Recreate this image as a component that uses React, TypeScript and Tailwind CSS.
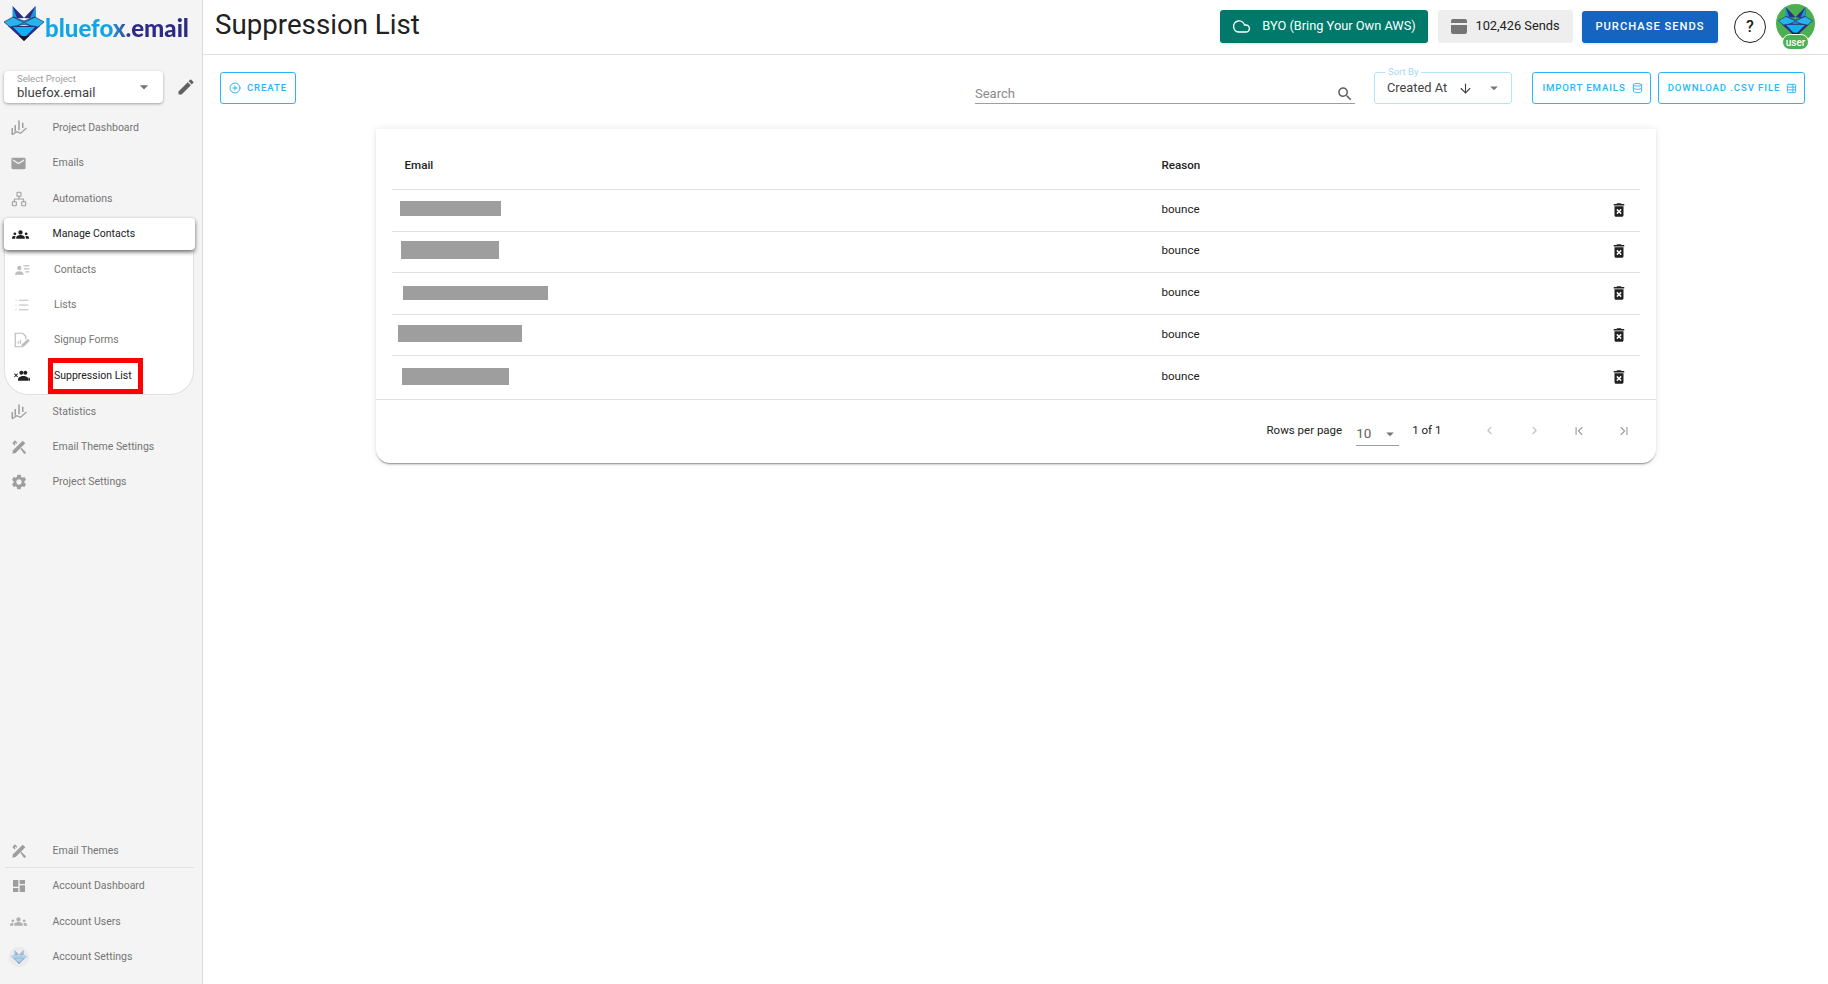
import React from "react";
import {
  ArrowDown,
  ChevronFirst,
  ChevronLast,
  ChevronLeft,
  ChevronRight,
  CirclePlus,
  Cloud,
  Database,
  List,
  Network,
  TableProperties,
} from "lucide-react";

const GROUPS =
  "M12 12.75c1.63 0 3.07.39 4.24.9 1.08.48 1.76 1.56 1.76 2.73V18H6v-1.61c0-1.18.68-2.26 1.76-2.73 1.17-.52 2.61-.91 4.24-.91zM4 13c1.1 0 2-.9 2-2s-.9-2-2-2-2 .9-2 2 .9 2 2 2zm1.13 1.1c-.37-.06-.74-.1-1.13-.1-.99 0-1.93.21-2.78.58C.48 14.9 0 15.62 0 16.43V18h4.5v-1.61c0-.83.23-1.61.63-2.29zM20 13c1.1 0 2-.9 2-2s-.9-2-2-2-2 .9-2 2 .9 2 2 2zm4 3.43c0-.81-.48-1.53-1.22-1.85-.85-.37-1.79-.58-2.78-.58-.39 0-.76.04-1.13.1.4.68.63 1.46.63 2.29V18H24v-1.57zM12 6c1.66 0 3 1.34 3 3s-1.34 3-3 3-3-1.34-3-3 1.34-3 3-3z";

function MuiIcon({ d, className }: { d: string; className?: string }) {
  return (
    <svg viewBox="0 0 24 24" fill="currentColor" className={className}>
      <path d={d} />
    </svg>
  );
}

function FoxMark({ className }: { className?: string }) {
  return (
    <svg viewBox="0 0 40 35" className={className}>
      <polygon points="8.5,0 20,12 8.5,13" fill="#1597d8" />
      <polygon points="8.5,0 20,12 13,12" fill="#2e2a85" />
      <polygon points="31.5,0 20,12 31.5,13" fill="#2e2a85" />
      <polygon points="31.5,0 26,12 31.5,13" fill="#1597d8" />
      <polygon points="4,20 36,20 20,35" fill="#2e2a85" />
      <polygon points="9,21 31,21 20,32" fill="#12b0f0" />
      <polygon points="0,16 9,11 20,15 31,11 40,16 34,21 20,18.5 6,21" fill="#27b4ee" stroke="#1c2a5e" strokeWidth="0.7" />
      <path d="M9 11L27 20M31 11L13 20" stroke="#1c2a5e" strokeWidth="0.7" fill="none" />
      <polygon points="15,30 25,30 20,35" fill="#111827" />
    </svg>
  );
}

function StatsIcon({ className }: { className?: string }) {
  return (
    <svg viewBox="0 0 24 24" fill="none" stroke="currentColor" strokeWidth="2" className={className}>
      <path d="M12 2v13M17 5v7M7 8v9M3 12v9" />
      <path d="M3 21l6-4 5 2 8-7" strokeWidth="1.6" />
    </svg>
  );
}

function ToolsIcon({ className }: { className?: string }) {
  return (
    <svg viewBox="0 0 24 24" fill="currentColor" className={className}>
      <path d="M2 6l4-4 3.5 3.5-1.6 1.6-1.3-1.3-1 1 1.3 1.3L5.300 9.700z" />
      <path d="M14 14.500l1.500-1.500 6.500 6.500V22h-2.500z" />
      <path d="M17.500 2.500l4 4L7 21l-5 1 1-5z" />
    </svg>
  );
}

function ContactsIcon({ className }: { className?: string }) {
  return (
    <svg viewBox="0 0 24 24" fill="currentColor" className={className}>
      <circle cx="8" cy="9" r="3.2" />
      <path d="M1.500 19c0-3.200 3-5 6.500-5s6.500 1.800 6.500 5z" />
      <path d="M14 5h9v1.600h-9zM15 9.500h8v1.600h-8zM17 14h6v1.600h-6z" />
    </svg>
  );
}

function FormIcon({ className }: { className?: string }) {
  return (
    <svg viewBox="0 0 24 24" fill="none" stroke="currentColor" strokeWidth="1.600" className={className}>
      <path d="M14 21H3V3h10l4 4v4" />
      <path d="M7 17v-3M10 17v-5" />
      <path d="M12 18l8-7 2 2-7 7h-3z" fill="currentColor" strokeWidth="1" />
    </svg>
  );
}

function SuppressedIcon({ className }: { className?: string }) {
  return (
    <svg viewBox="0 0 24 24" fill="currentColor" className={className}>
      <path d="M0 9l1-1 2 2 2-2 1 1-2 2 2 2-1 1-2-2-2 2-1-1 2-2z" />
      <circle cx="11" cy="7" r="3" />
      <circle cx="17" cy="7" r="3" />
      <path d="M6 19v-2c0-2.400 3.500-5 8-5s8 2.600 8 5v2z" />
      <path d="M22 14c1 .5 2 1.500 2 2.900V19h-1.500z" />
    </svg>
  );
}

function NavRow({
  icon,
  label,
  sub,
}: {
  icon: React.ReactNode;
  label: string;
  sub?: boolean;
}) {
  return (
    <div className="h-[35.4px] flex items-center text-[#757575]">
      <div className={`flex justify-center shrink-0 text-[#9e9e9e] ${sub ? "w-[40px] ml-[1px]" : "w-[37px]"}`}>{icon}</div>
      <span className={sub ? "ml-[12px]" : "ml-[15.5px]"}>{label}</span>
    </div>
  );
}

const redacted = [
  "ml-[8px] w-[101px] h-[15px] mb-[5px]",
  "ml-[9px] w-[98px] h-[18px] mb-[4px]",
  "ml-[11px] w-[145px] h-[14px] mb-[1px]",
  "ml-[6px] w-[124px] h-[17px] mb-[3px]",
  "ml-[10px] w-[107px] h-[17px] mb-[3px]",
];

const rowHeights = ["h-[42px]", "h-[41px]", "h-[42px]", "h-[41px]", "h-[43px]"];

export default function App() {
  return (
    <div className="h-screen flex bg-white text-[#212121] overflow-hidden font-['Roboto',sans-serif]">
      {/* Sidebar */}
      <aside className="w-[203px] shrink-0 bg-[#f4f4f4] border-r border-[#dcdcdc] flex flex-col justify-between text-[10.5px] pb-[9.5px]">
        <div>
          <div className="h-[71px] pl-[4px] pt-[6px]">
            <div className="flex items-start">
              <FoxMark className="w-[40px] h-[35px] shrink-0" />
              <span className="ml-[1px] mt-[7px] font-['Lato',sans-serif] font-black text-[24px] leading-[30px] bg-gradient-to-r from-[#12a5e4] from-45% to-[#2d2a87] to-60% bg-clip-text text-transparent">
                bluefox.email
              </span>
            </div>
          </div>

          <div className="flex items-center pl-[4px]">
            <div className="w-[159px] h-[32px] bg-white rounded-[4px] shadow-[0_1px_3px_rgba(0,0,0,0.35)] pl-[13px] pr-[9px] flex items-center justify-between">
              <div>
                <div className="text-[9.6px] leading-[11px] text-[#9e9e9e]">Select Project</div>
                <div className="mt-[1px] text-[13.1px] leading-[16px] text-[#424242]">bluefox.email</div>
              </div>
              <svg viewBox="0 0 24 24" className="w-[20px] h-[20px] text-[#757575]" fill="currentColor">
                <path d="M7 10l5 5 5-5z" />
              </svg>
            </div>
            <MuiIcon
              d="M3 17.25V21h3.75L17.81 9.94l-3.75-3.75L3 17.25zM20.71 7.04c.39-.39.39-1.02 0-1.41l-2.34-2.34a.9959.9959 0 0 0-1.41 0l-1.83 1.83 3.75 3.75 1.83-1.83z"
              className="ml-[13px] w-[20px] h-[20px] text-[#616161]"
            />
          </div>

          <div className="mt-[7.2px]">
            <NavRow icon={<StatsIcon className="w-[18px] h-[18px]" />} label="Project Dashboard" />
            <NavRow
              icon={
                <MuiIcon
                  d="M20 4H4c-1.1 0-1.99.9-1.99 2L2 18c0 1.1.9 2 2 2h16c1.1 0 2-.9 2-2V6c0-1.1-.9-2-2-2zm0 4l-8 5-8-5V6l8 5 8-5v2z"
                  className="w-[17px] h-[17px]"
                />
              }
              label="Emails"
            />
            <div className="pt-[0.3px]">
              <NavRow icon={<Network className="w-[16px] h-[16px]" strokeWidth={1.6} />} label="Automations" />
            </div>
          </div>

          <div className="mt-[1.6px] ml-[4px] mr-[7px] h-[32px] bg-white rounded-[4px] shadow-[0_2px_4px_rgba(0,0,0,0.6)] relative z-10 flex items-center text-[#212121]">
            <div className="w-[33px] flex justify-center shrink-0">
              <MuiIcon d={GROUPS} className="w-[17px] h-[17px] text-[#212121]" />
            </div>
            <span className="ml-[15.5px] mb-[1px]">Manage Contacts</span>
          </div>

          <div className="ml-[4px] mr-[8px] h-[145px] -mb-[2px] bg-white border border-t-0 border-[#e0e0e0] rounded-b-[24px] relative">
            <div className="-ml-[4px] pt-[1.6px]">
              <NavRow sub icon={<ContactsIcon className="w-[16px] h-[16px] text-[#bdbdbd]" />} label="Contacts" />
              <NavRow sub icon={<List className="w-[16px] h-[16px] text-[#bdbdbd]" strokeWidth={1.6} />} label="Lists" />
              <NavRow sub icon={<FormIcon className="w-[18px] h-[18px] text-[#bdbdbd]" />} label="Signup Forms" />
              <div className="h-[35.4px] flex items-center text-[#212121]">
                <div className="w-[40px] ml-[1px] flex justify-center shrink-0">
                  <SuppressedIcon className="w-[16px] h-[16px] text-[#212121]" />
                </div>
                <div className="ml-[6px] w-[95px] h-[36px] border-[5px] border-[#ff0000] flex items-center pl-[1px] pt-[1px] shrink-0 whitespace-nowrap">
                  Suppression List
                </div>
              </div>
            </div>
          </div>

          <div className="pt-[1px]">
            <NavRow icon={<StatsIcon className="w-[18px] h-[18px]" />} label="Statistics" />
          </div>
          <NavRow icon={<ToolsIcon className="w-[16px] h-[16px]" />} label="Email Theme Settings" />
          <div className="-mt-[0.4px]">
            <NavRow
              icon={
                <MuiIcon
                  d="M19.14 12.94c.04-.3.06-.61.06-.94 0-.32-.02-.64-.07-.94l2.03-1.58c.18-.14.23-.41.12-.61l-1.92-3.32c-.12-.22-.37-.29-.59-.22l-2.39.96c-.5-.38-1.03-.7-1.62-.94l-.36-2.54c-.04-.24-.24-.41-.48-.41h-3.84c-.24 0-.43.17-.47.41l-.36 2.54c-.59.24-1.13.57-1.62.94l-2.39-.96c-.22-.08-.47 0-.59.22L2.74 8.87c-.12.21-.08.47.12.61l2.03 1.58c-.05.3-.09.63-.09.94s.02.64.07.94l-2.03 1.58c-.18.14-.23.41-.12.61l1.92 3.32c.12.22.37.29.59.22l2.39-.96c.5.38 1.03.7 1.62.94l.36 2.54c.05.24.24.41.48.41h3.84c.24 0 .44-.17.47-.41l.36-2.54c.59-.24 1.13-.56 1.62-.94l2.39.96c.22.08.47 0 .59-.22l1.92-3.32c.12-.22.07-.47-.12-.61l-2.01-1.58zM12 15.6c-1.98 0-3.6-1.62-3.6-3.6s1.62-3.6 3.6-3.6 3.6 1.62 3.6 3.6-1.62 3.6-3.6 3.6z"
                  className="w-[18px] h-[18px]"
                />
              }
              label="Project Settings"
            />
          </div>
        </div>

        <div>
          <div className="-mb-[1.5px]">
            <NavRow icon={<ToolsIcon className="w-[16px] h-[16px]" />} label="Email Themes" />
          </div>
          <div className="ml-[5px] mr-[8px] border-t border-[#e0e0e0]" />
          <NavRow
            icon={
              <MuiIcon
                d="M3 13h8V3H3v10zm0 8h8v-6H3v6zm10 0h8V11h-8v10zm0-18v6h8V3h-8z"
                className="w-[16px] h-[16px]"
              />
            }
            label="Account Dashboard"
          />
          <NavRow icon={<MuiIcon d={GROUPS} className="w-[17px] h-[17px] text-[#b0b0b0]" />} label="Account Users" />
          <NavRow
            icon={
              <div className="w-[20px] h-[20px] rounded-full bg-[#e8e8ee] border border-[#dddddd] flex items-center justify-center opacity-60">
                <FoxMark className="w-[16px] h-[14px] opacity-60" />
              </div>
            }
            label="Account Settings"
          />
        </div>
      </aside>

      {/* Main */}
      <main className="flex-1 min-w-0">
        <header className="h-[55px] border-b border-[#e0e0e0] flex items-center pl-[12px] pr-[13px]">
          <h1 className="text-[27.7px] leading-none text-[#212121] mb-[5px]">Suppression List</h1>
          <div className="ml-auto flex items-center mb-[1px]">
            <button className="w-[208px] h-[33px] pb-[1px] rounded-[3px] bg-[#00796b] text-white text-[12.8px] flex items-center justify-center gap-[11px] shadow-sm">
              <Cloud className="w-[19px] h-[19px]" strokeWidth={1.8} />
              BYO (Bring Your Own AWS)
            </button>
            <div className="ml-[10px] w-[135px] h-[33px] pb-[1px] rounded-[3px] bg-[#eeeeee] text-[12.8px] flex items-center justify-center gap-[8px]">
              <span className="w-[16px] h-[15px] rounded-[2px] bg-[#757575] flex items-center">
                <span className="w-full h-[2px] bg-[#eeeeee] mb-[4px]" />
              </span>
              102,426 Sends
            </div>
            <button className="ml-[9px] w-[136px] h-[32px] pt-[1px] rounded-[3px] bg-[#1565c0] text-white text-[11.2px] font-medium tracking-[1px] shadow-sm">
              PURCHASE SENDS
            </button>
            <div className="ml-[16px] w-[32px] h-[32px] rounded-full border border-[#212121] flex items-center justify-center text-[16px] font-medium">
              ?
            </div>
            <div className="ml-[10px] mb-[6px] w-[39px] h-[39px] rounded-full bg-[#4caf50] relative flex items-center justify-center">
              <FoxMark className="w-[35px] h-[30px] mb-[4px]" />
              <span className="absolute left-[6px] top-[30px] w-[27px] h-[16px] rounded-full bg-[#4caf50] border border-white text-white text-[10px] font-medium flex items-center justify-center">
                user
              </span>
            </div>
          </div>
        </header>

        <div className="pt-[17px] pl-[17px] pr-[23px] flex items-center">
          <button className="w-[76px] h-[32px] border border-[#29b6f6] rounded-[3px] text-[#29b6f6] text-[9.6px] font-medium tracking-[0.9px] flex items-center justify-center gap-[6px]">
            <CirclePlus className="w-[12px] h-[12px] mb-[1px]" />
            CREATE
          </button>
          <div className="ml-auto w-[380px] h-[26px] mt-[6px] border-b border-[#9e9e9e] flex items-end justify-between pr-[1px] text-[13px] leading-[18px] text-[#8a8a8a]">
            Search
            <MuiIcon
              d="M15.5 14h-.79l-.28-.27C15.41 12.59 16 11.11 16 9.5 16 5.91 13.09 3 9.5 3S3 5.91 3 9.5 5.91 16 9.5 16c1.61 0 3.09-.59 4.23-1.57l.27.28v.79l5 4.99L20.49 19l-4.99-5zm-6 0C7.01 14 5 11.99 5 9.5S7.01 5 9.5 5 14 7.01 14 9.5 11.99 14 9.5 14z"
              className="w-[18px] h-[18px] text-[#616161]"
            />
          </div>
          <div className="ml-[19px] w-[138px] h-[32px] border border-[#b3e5fc] rounded-[3px] relative flex items-center pl-[12px] text-[12.8px] text-[#424242]">
            <span className="absolute left-[10px] -top-[6px] bg-white px-[3px] text-[9.5px] leading-[10px] text-[#a3d9f5]">
              Sort By
            </span>
            Created At
            <ArrowDown className="ml-[11px] w-[15px] h-[15px] text-[#424242]" strokeWidth={1.8} />
            <svg viewBox="0 0 24 24" className="ml-[12px] w-[18px] h-[18px] text-[#757575]" fill="currentColor">
              <path d="M7 10l5 5 5-5z" />
            </svg>
          </div>
          <button className="ml-[20px] w-[119px] h-[32px] pl-[2px] border border-[#29b6f6] rounded-[3px] text-[#29b6f6] text-[9.6px] font-medium tracking-[0.9px] flex items-center justify-center gap-[6px]">
            IMPORT EMAILS
            <Database className="w-[11px] h-[12px]" />
          </button>
          <button className="ml-[7px] w-[147px] h-[32px] pl-[2px] border border-[#29b6f6] rounded-[3px] text-[#29b6f6] text-[9.6px] font-medium tracking-[0.9px] flex items-center justify-center gap-[6px]">
            DOWNLOAD .CSV FILE
            <TableProperties className="w-[11px] h-[11px]" />
          </button>
        </div>

        {/* Table card */}
        <section className="mx-auto mt-[25px] w-[1280px] rounded-b-[14px] bg-white shadow-[0_2px_2px_-1px_rgba(0,0,0,0.45),0_0_7px_rgba(0,0,0,0.1)]">
          <div className="px-[16px] pt-[11px]">
            <div className="h-[50px] border-b border-[#e0e0e0] flex items-center text-[11.6px] font-medium pt-[3px]">
              <div className="w-[770px] pl-[13px]">Email</div>
              <div>Reason</div>
            </div>
            {redacted.map((cls, i) => (
              <div
                key={i}
                className={`flex items-center text-[11.6px] ${rowHeights[i]} ${i < 4 ? "border-b border-[#e0e0e0]" : ""}`}
              >
                <div className="w-[770px] flex items-center">
                  <div className={`bg-[#9e9e9e] ${cls}`} />
                </div>
                <div className={i === 3 ? "mb-[1px]" : "mb-[2px]"}>bounce</div>
                <MuiIcon
                  d="M6 19c0 1.1.9 2 2 2h8c1.1 0 2-.9 2-2V7H6v12zm2.46-7.12l1.41-1.41L12 12.59l2.12-2.12 1.41 1.41L13.41 14l2.12 2.12-1.41 1.41L12 15.41l-2.12 2.12-1.41-1.41L10.59 14l-2.13-2.12zM15.5 4l-1-1h-5l-1 1H5v2h14V4z"
                  className={`ml-auto mr-[12px] w-[18px] h-[18px] text-[#212121] ${i === 1 ? "mb-[2px]" : "mb-[1px]"}`}
                />
              </div>
            ))}
          </div>
          <div className="h-[64px] border-t border-[#e0e0e0] flex items-center text-[11.5px] pb-[2px]">
            <div className="ml-[891px]">Rows per page</div>
            <div className="ml-[14px] w-[43px] h-[24px] mt-[6px] pt-[1px] border-b border-[#9e9e9e] flex items-center justify-between text-[13.5px] text-[#616161]">
              <span>10</span>
              <svg viewBox="0 0 24 24" className="w-[18px] h-[18px] text-[#757575]" fill="currentColor">
                <path d="M7 10l5 5 5-5z" />
              </svg>
            </div>
            <div className="ml-[13px]">1 of 1</div>
            <div className="ml-[42px] flex items-center text-[#c4c4c4]">
              <ChevronLeft className="w-[13px] h-[13px] mr-[32px]" />
              <ChevronRight className="w-[13px] h-[13px] mr-[31px]" />
              <ChevronFirst className="w-[14px] h-[14px] mr-[31px] text-[#9e9e9e]" />
              <ChevronLast className="w-[14px] h-[14px] text-[#9e9e9e]" />
            </div>
          </div>
        </section>
      </main>
    </div>
  );
}
